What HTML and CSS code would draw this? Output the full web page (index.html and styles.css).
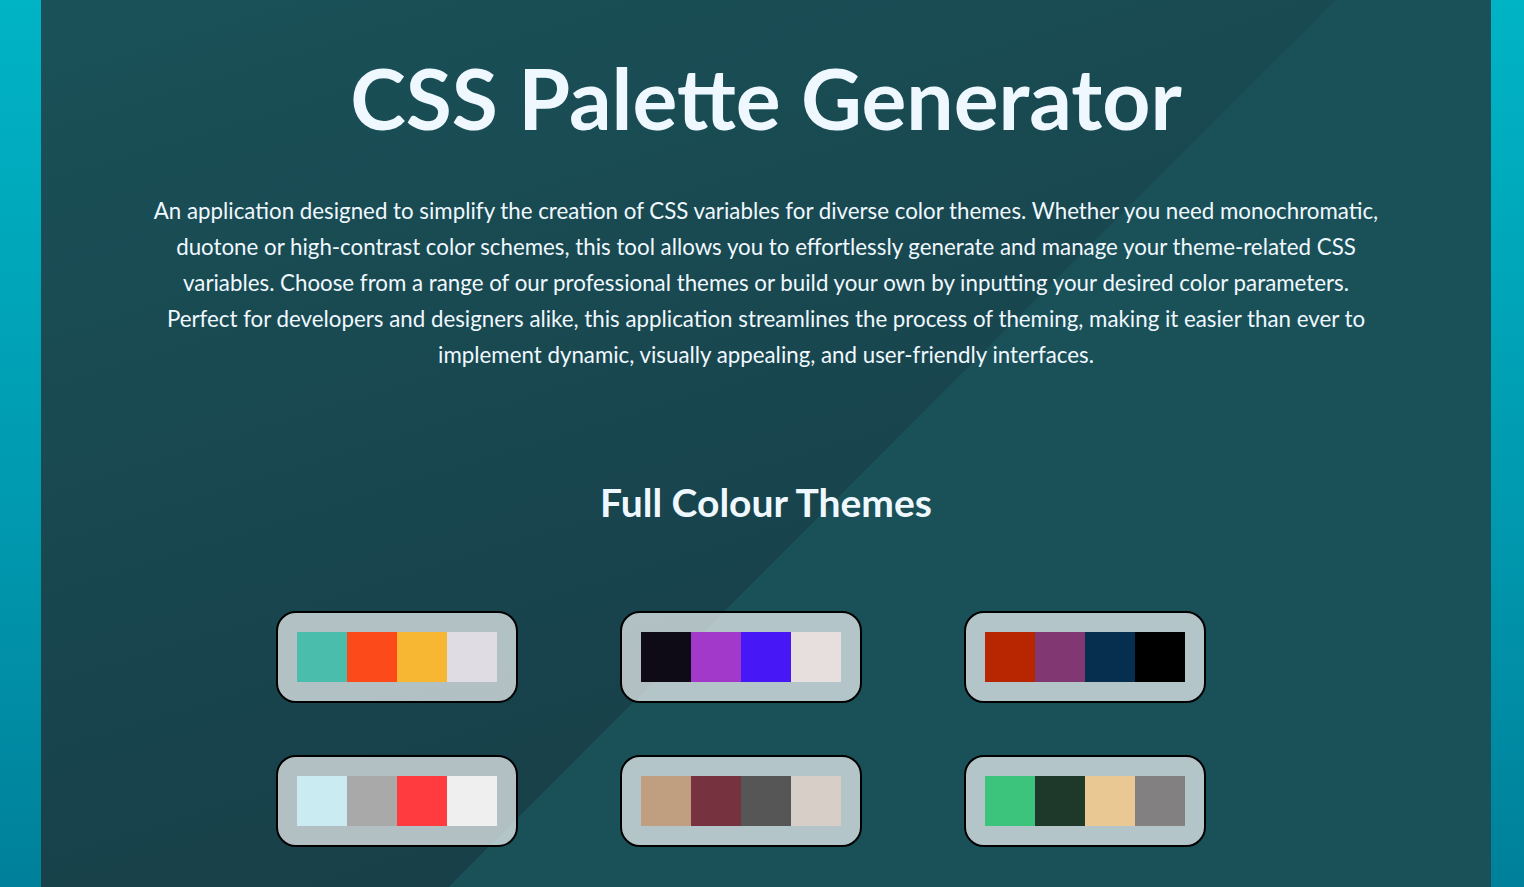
FILE: index.html
```html
<!DOCTYPE html>
<html lang="en">
<head>
<meta charset="utf-8">
<title>CSS Palette Generator</title>
<link rel="stylesheet" href="styles.css">
</head>
<body>
<main class="page">
  <header class="intro">
    <h1 class="title">CSS Palette Generator</h1>
    <p class="lead">An application designed to simplify the creation of CSS variables for diverse color themes. Whether you need monochromatic, duotone or high-contrast color schemes, this tool allows you to effortlessly generate and manage your theme-related CSS variables. Choose from a range of our professional themes or build your own by inputting your desired color parameters. Perfect for developers and designers alike, this application streamlines the process of theming, making it easier than ever to implement dynamic, visually appealing, and user-friendly interfaces.</p>
  </header>
  <section class="themes">
    <h2 class="section-title">Full Colour Themes</h2>
    <div class="grid">
      <div class="card"><span class="sw c1a"></span><span class="sw c1b"></span><span class="sw c1c"></span><span class="sw c1d"></span></div>
      <div class="card"><span class="sw c2a"></span><span class="sw c2b"></span><span class="sw c2c"></span><span class="sw c2d"></span></div>
      <div class="card"><span class="sw c3a"></span><span class="sw c3b"></span><span class="sw c3c"></span><span class="sw c3d"></span></div>
      <div class="card"><span class="sw c4a"></span><span class="sw c4b"></span><span class="sw c4c"></span><span class="sw c4d"></span></div>
      <div class="card"><span class="sw c5a"></span><span class="sw c5b"></span><span class="sw c5c"></span><span class="sw c5d"></span></div>
      <div class="card"><span class="sw c6a"></span><span class="sw c6b"></span><span class="sw c6c"></span><span class="sw c6d"></span></div>
    </div>
  </section>
</main>
</body>
</html>
```
FILE: styles.css
```css
* { box-sizing: border-box; }
html, body { height: 100%; }
body {
  margin: 0;
  padding: 0 33px 0 41px;
  background: linear-gradient(to bottom, #00b4c5 0%, #0098ae 60%, #00809a 100%);
  font-family: "Lato", "Open Sans", sans-serif;
  color: #f0f8ff;
  overflow: hidden;
}
.page {
  min-height: 100%;
  background:
    linear-gradient(135deg, rgba(26, 81, 88, 0) 55.4%, #1a5158 55.4%),
    linear-gradient(163deg, #1a5158 0%, #18434c 60%, #183a44 100%);
  padding-top: 48px;
}
.intro { text-align: center; }
.title {
  margin: 0;
  font-size: 84px;
  font-weight: 700;
  line-height: 100px;
}
.lead {
  max-width: 1227px;
  margin: 45px auto 0;
  font-size: 22.3px;
  line-height: 36px;
}
.themes { margin-top: 107px; }
.section-title {
  margin: 0;
  text-align: center;
  font-size: 39px;
  font-weight: 700;
  line-height: 44px;
}
.grid {
  display: grid;
  grid-template-columns: repeat(3, 242px);
  column-gap: 102px;
  row-gap: 52px;
  justify-content: center;
  padding-right: 50px;
  margin-top: 87px;
}
.card {
  display: flex;
  padding: 19px;
  border: 2px solid #000;
  border-radius: 20px;
  background: rgba(255, 255, 255, 0.67);
}
.sw { width: 50px; height: 50px; }
.c1a { background: #4abdac; } .c1b { background: #fc4a1a; } .c1c { background: #f7b733; } .c1d { background: #dfdce3; }
.c2a { background: #0e0b16; } .c2b { background: #a239ca; } .c2c { background: #4717f6; } .c2d { background: #e7dfdd; }
.c3a { background: #b82601; } .c3b { background: #813772; } .c3c { background: #062f4f; } .c3d { background: #000000; }
.c4a { background: #caebf2; } .c4b { background: #a9a9a9; } .c4c { background: #ff3b3f; } .c4d { background: #efefef; }
.c5a { background: #c09f80; } .c5b { background: #76323f; } .c5c { background: #565656; } .c5d { background: #d7cec7; }
.c6a { background: #3cc47c; } .c6b { background: #1e392a; } .c6c { background: #e9c893; } .c6d { background: #828081; }
```
